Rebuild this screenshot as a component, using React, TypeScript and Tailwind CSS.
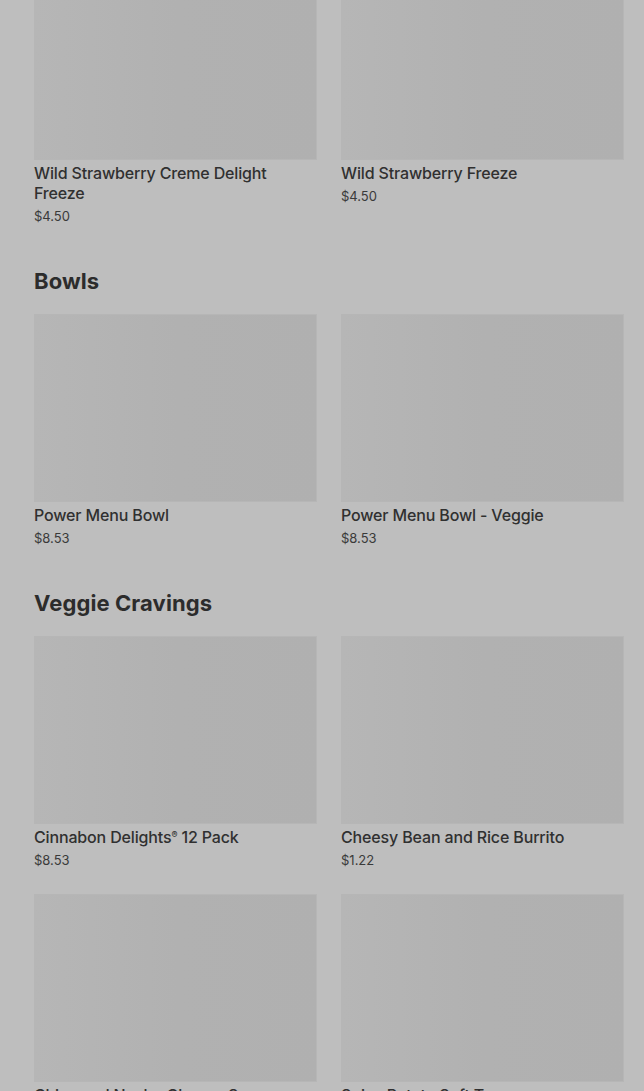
import React from 'react';

type Item = { name: React.ReactNode; price: string };

const sections: { title?: string; items: Item[] }[] = [
  {
    items: [
      { name: 'Wild Strawberry Creme Delight Freeze', price: '$4.50' },
      { name: 'Wild Strawberry Freeze', price: '$4.50' },
    ],
  },
  {
    title: 'Bowls',
    items: [
      { name: 'Power Menu Bowl', price: '$8.53' },
      { name: 'Power Menu Bowl - Veggie', price: '$8.53' },
    ],
  },
  {
    title: 'Veggie Cravings',
    items: [
      {
        name: (
          <>
            Cinnabon Delights<span className="relative -top-[5px] text-[9px] leading-none">®</span> 12 Pack
          </>
        ),
        price: '$8.53',
      },
      { name: 'Cheesy Bean and Rice Burrito', price: '$1.22' },
      { name: 'Chips and Nacho Cheese Sauce', price: '$2.49' },
      { name: 'Spicy Potato Soft Taco', price: '$1.89' },
    ],
  },
];

function Card({ item }: { item: Item }) {
  return (
    <div className="flex flex-col">
      <div className="h-[188px] border border-[#b6b6b6] bg-gradient-to-r from-[#b6b6b6] via-[#b1b1b1] to-[#b0b0b0]" />
      <p className="mt-[3px] text-[16px] leading-[20px] font-medium tracking-[-0.15px] text-[#303030]">
        {item.name}
      </p>
      <p className="mt-[4px] text-[13px] leading-[18px] text-[#3a3a3a]">{item.price}</p>
    </div>
  );
}

export default function App() {
  return (
    <div
      className="h-screen overflow-hidden bg-[#bebebe]"
      style={{ fontFamily: 'Inter, "Noto Sans", sans-serif' }}
    >
      <div className="-mt-[28px] pl-[34px] pr-[20px] flex flex-col gap-[42px]">
        {sections.map((s, i) => (
          <section key={i} className="flex flex-col">
            {s.title && (
              <h2 className="mb-[19px] text-[22px] leading-[28px] font-bold tracking-[0.1px] text-[#2c2c2c]">
                {s.title}
              </h2>
            )}
            <div className="grid grid-cols-2 gap-x-[24px] gap-y-[25px]">
              {s.items.map((it, j) => (
                <Card key={j} item={it} />
              ))}
            </div>
          </section>
        ))}
      </div>
    </div>
  );
}
